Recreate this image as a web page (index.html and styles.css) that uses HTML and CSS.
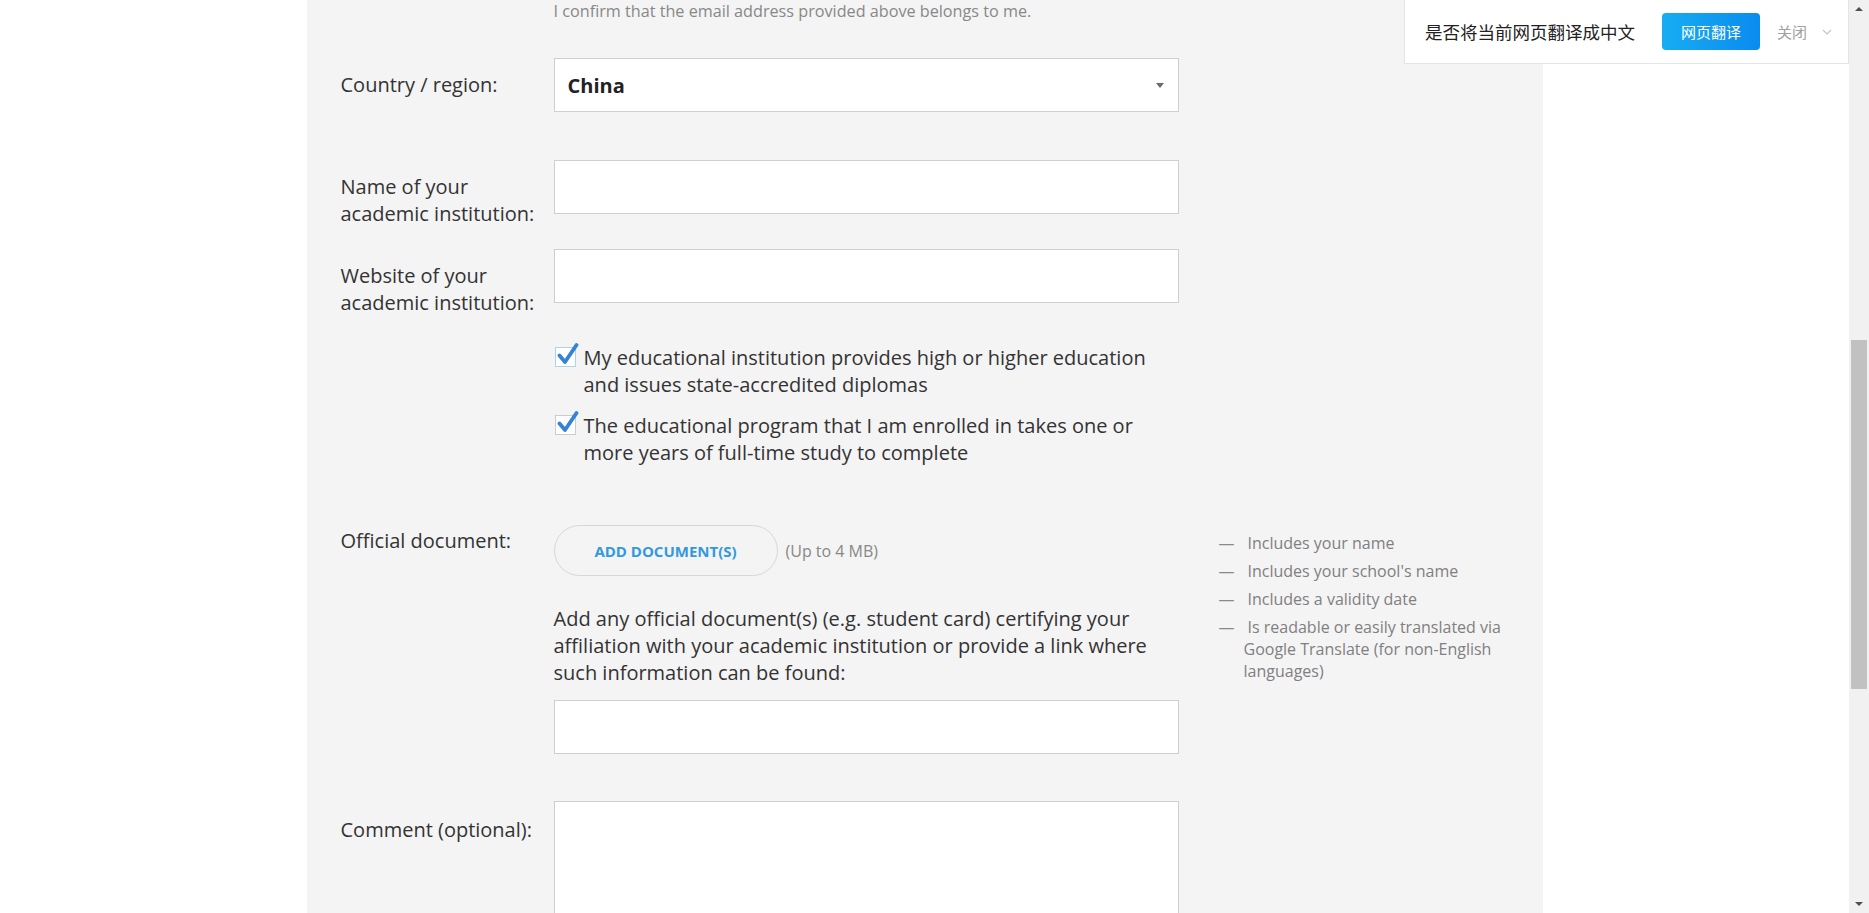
FILE: index.html
```html
<!DOCTYPE html>
<html>
<head>
  <meta charset="utf-8">
  <link rel="stylesheet" href="styles.css">
</head>
<body>

  <div class="page">
    <main class="panel">

      <div class="row">
        <div></div>
        <div class="field">
          <p class="confirm">I confirm that the email address provided above belongs to me.</p>
        </div>
      </div>

      <div class="row row-country">
        <label class="row-label" for="country">Country / region:</label>
        <div class="field">
          <div class="select-wrap">
            <select id="country" class="select">
              <option>China</option>
            </select>
          </div>
        </div>
      </div>

      <div class="row row-name">
        <label class="row-label" for="schoolName">Name of your<br>academic institution:</label>
        <div class="field">
          <input type="text" id="schoolName" class="text-input">
        </div>
      </div>

      <div class="row row-website">
        <label class="row-label" for="schoolSite">Website of your<br>academic institution:</label>
        <div class="field">
          <input type="text" id="schoolSite" class="text-input">
        </div>
      </div>

      <div class="row row-checks">
        <div></div>
        <div class="field">
          <label class="check">
            <span class="check-box check-box-focus">
              <svg class="check-mark" width="26" height="24" viewBox="0 0 26 24"><path d="M4.5 12.5 L10 19 L21.5 2" fill="none" stroke="#3583d6" stroke-width="3.8" stroke-linecap="round" stroke-linejoin="round"/></svg>
            </span>
            <span class="check-text">My educational institution provides high or higher education and issues state-accredited diplomas</span>
          </label>
          <label class="check">
            <span class="check-box">
              <svg class="check-mark" width="26" height="24" viewBox="0 0 26 24"><path d="M4.5 12.5 L10 19 L21.5 2" fill="none" stroke="#3583d6" stroke-width="3.8" stroke-linecap="round" stroke-linejoin="round"/></svg>
            </span>
            <span class="check-text">The educational program that I am enrolled in takes one or more years of full-time study to complete</span>
          </label>
        </div>
      </div>

      <div class="row row-document">
        <div class="row-label row-label-top">Official document:</div>
        <div class="field">
          <div class="upload">
            <button class="upload-btn">Add document(s)</button>
            <span class="upload-note">(Up to 4 MB)</span>
          </div>
          <p class="doc-help">Add any official document(s) (e.g. student card) certifying your affiliation with your academic institution or provide a link where such information can be found:</p>
          <input type="text" class="text-input">
        </div>
        <ul class="tips">
          <li>Includes your name</li>
          <li>Includes your school's name</li>
          <li>Includes a validity date</li>
          <li>Is readable or easily translated via Google Translate (for non-English languages)</li>
        </ul>
      </div>

      <div class="row row-comment">
        <label class="row-label row-label-comment" for="comment">Comment (optional):</label>
        <div class="field">
          <textarea id="comment" class="textarea"></textarea>
        </div>
      </div>

    </main>
  </div>

  <div class="translate-bar">
    <span class="translate-text">是否将当前网页翻译成中文</span>
    <button class="translate-btn">网页翻译</button>
    <span class="translate-close">关闭</span>
    <svg class="translate-more" width="10" height="6" viewBox="0 0 10 6"><path d="M1 1 L5 5 L9 1" fill="none" stroke="#c4c4c4" stroke-width="1.2"/></svg>
  </div>

  <div class="scrollbar">
    <span class="scroll-arrow scroll-up"></span>
    <span class="scroll-thumb"></span>
    <span class="scroll-arrow scroll-down"></span>
  </div>

</body>
</html>
```

FILE: styles.css
```css
* {
  box-sizing: border-box;
}

html,
body {
  margin: 0;
  height: 100%;
  overflow: hidden;
}

body {
  font-family: 'Open Sans', 'Noto Sans', sans-serif;
  background-color: #ffffff;
  color: #333;
}

.page {
  width: 1849px;
}

.panel {
  width: 1236px;
  min-height: 913px;
  margin: 0 auto;
  padding: 0 34px;
  background: #f4f4f4;
}

.row {
  display: grid;
  grid-template-columns: 213px 625px 330px;
  align-items: start;
}

.row-label {
  font-size: 20px;
  line-height: 27px;
  padding-top: 13px;
  color: #333;
}

.row-label-top {
  padding-top: 2px;
}

.row-label-comment {
  padding-top: 15px;
}

.confirm {
  margin: 0;
  font-size: 16.2px;
  line-height: 22px;
  color: #888;
}

.row-country {
  margin-top: 36px;
}

.row-name {
  margin-top: 48px;
}

.row-website {
  margin-top: 22px;
}

.row-checks {
  margin-top: 28px;
}

.row-document {
  margin-top: 59px;
}

.row-comment {
  margin-top: 47px;
}

/* inputs */

.text-input,
.select,
.textarea {
  display: block;
  width: 100%;
  height: 54px;
  border: 1px solid #cfcfcf;
  border-radius: 0;
  background: #ffffff;
  font-family: inherit;
  font-size: 20px;
  color: #222;
  padding: 0 13px;
  outline: none;
}

.select-wrap {
  position: relative;
}

.select {
  appearance: none;
  -webkit-appearance: none;
  font-weight: 700;
}

.select-wrap::after {
  content: "";
  position: absolute;
  right: 15px;
  top: 25px;
  border-left: 4px solid transparent;
  border-right: 4px solid transparent;
  border-top: 5px solid #6a6a6a;
}

.textarea {
  height: 200px;
  resize: none;
}

/* checkboxes */

.check {
  display: flex;
  align-items: flex-start;
  gap: 8px;
  font-size: 20px;
  line-height: 27px;
  color: #333;
  cursor: pointer;
}

.check + .check {
  margin-top: 14px;
}

.check-box {
  position: relative;
  flex: none;
  width: 21px;
  height: 20px;
  margin: 3px 0 0 1px;
  background: #ffffff;
  border: 1px solid #cccccc;
}

.check-box-focus {
  border-color: #a9d5f3;
}

.check-mark {
  position: absolute;
  left: -1px;
  top: -5px;
}

/* upload */

.upload {
  display: flex;
  align-items: center;
  gap: 8px;
}

.upload-btn {
  width: 224px;
  height: 51px;
  border: 1px solid #d7d7d7;
  border-radius: 26px;
  background: transparent;
  font-family: inherit;
  font-size: 15px;
  font-weight: 700;
  text-transform: uppercase;
  color: #3399df;
  cursor: pointer;
}

.upload-note {
  font-size: 16px;
  color: #888;
}

.doc-help {
  margin: 29px 0 14px;
  font-size: 20px;
  line-height: 27px;
  color: #333;
}

.tips {
  list-style: none;
  margin: 0 0 0 40px;
  padding: 7px 0 0 25px;
  font-size: 16px;
  line-height: 22px;
  color: #808080;
}

.tips li + li {
  margin-top: 6px;
}

.tips li::before {
  content: "—";
  display: inline-block;
  width: 29px;
  margin-left: -25px;
  color: #8a8a8a;
}

/* translate prompt */

.translate-bar {
  position: fixed;
  top: -1px;
  left: 1404px;
  width: 445px;
  height: 65px;
  display: flex;
  align-items: center;
  padding-left: 20px;
  background: #ffffff;
  border: 1px solid #e4e4e4;
  font-family: "Noto Sans CJK SC", sans-serif;
}

.translate-text {
  font-size: 17.5px;
  color: #222;
}

.translate-btn {
  margin-left: 27px;
  width: 98px;
  height: 37px;
  border: none;
  border-radius: 4px;
  background: linear-gradient(90deg, #17adf2, #0a8bef);
  font-family: inherit;
  font-size: 15px;
  color: #ffffff;
}

.translate-close {
  margin-left: 17px;
  font-size: 15px;
  color: #a0a0a0;
}

.translate-more {
  margin-left: 15px;
}

/* scrollbar */

.scrollbar {
  position: fixed;
  top: 0;
  right: 0;
  width: 20px;
  height: 100%;
  background: #f1f1f1;
}

.scroll-thumb {
  position: absolute;
  left: 2px;
  right: 2px;
  top: 340px;
  height: 349px;
  background: #c1c1c1;
}

.scroll-arrow {
  position: absolute;
  left: 6px;
  border-left: 4px solid transparent;
  border-right: 4px solid transparent;
}

.scroll-up {
  top: 7px;
  border-bottom: 4px solid #505050;
}

.scroll-down {
  bottom: 7px;
  border-top: 4px solid #505050;
}
```
